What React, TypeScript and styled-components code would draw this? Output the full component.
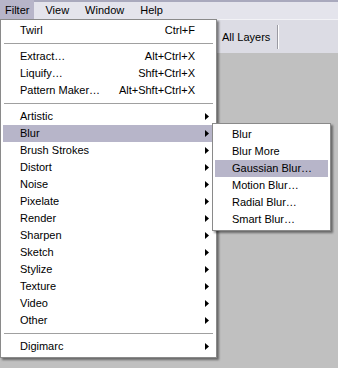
import styled, { createGlobalStyle } from 'styled-components';

const GlobalStyle = createGlobalStyle`
  html, body {
    margin: 0;
    padding: 0;
    background: #c0c0c0;
  }
  body {
    font-family: "Liberation Sans", Arial, sans-serif;
    font-size: 11px;
    color: #000;
  }
`;

const Page = styled.div`
  position: relative;
  width: 338px;
  height: 368px;
  overflow: hidden;
  background: #c0c0c0;
`;

const MenuBar = styled.div`
  display: flex;
  gap: 6px;
  height: 19px;
  background: #e4e4ec;
  border-top: 2px solid #a9a9bd;
  box-sizing: border-box;
`;

const BarItem = styled.div<{ $open?: boolean }>`
  padding: 0 5px;
  background: ${(p) => (p.$open ? '#b7b5c9' : 'transparent')};
  margin-top: ${(p) => (p.$open ? '-2px' : '0')};
  height: ${(p) => (p.$open ? '19px' : '17px')};
  line-height: ${(p) => (p.$open ? '21px' : '17px')};
`;

const Toolbar = styled.div`
  display: flex;
  align-items: center;
  height: 34px;
  padding-left: 222px;
  background: #dcdce4;
  border-top: 1px solid #f2f2f6;
  box-sizing: border-box;
`;

const ToolLabel = styled.span`
  margin-right: 7px;
`;

const ToolSep = styled.div`
  width: 1px;
  height: 24px;
  background: #9a9aa2;
  border-right: 1px solid #ffffff;
`;

const Menu = styled.div<{ $left: number; $top: number; $width: number }>`
  position: absolute;
  left: ${(p) => p.$left}px;
  top: ${(p) => p.$top}px;
  width: ${(p) => p.$width}px;
  box-sizing: border-box;
  background: #ffffff;
  border: 1px solid #8a8a8a;
  padding: 2px;
  box-shadow: 2px 2px 2px rgba(0, 0, 0, 0.45);
`;

const Row = styled.div<{ $active?: boolean }>`
  display: grid;
  grid-template-columns: 1fr auto 19px;
  align-items: center;
  height: 17px;
  line-height: 17px;
  padding-left: 17px;
  white-space: nowrap;
  background: ${(p) => (p.$active ? '#b7b5c9' : 'transparent')};
`;

const Shortcut = styled.span`
  text-align: right;
`;

const ArrowCell = styled.span`
  display: flex;
  align-items: center;
  padding-left: 10px;
`;

const Separator = styled.div`
  height: 1px;
  margin: 4px 1px;
  background: #a0a0a0;
`;

const SubRow = styled.div<{ $active?: boolean }>`
  height: 17px;
  line-height: 17px;
  padding-left: 17px;
  white-space: nowrap;
  background: ${(p) => (p.$active ? '#b7b5c9' : 'transparent')};
`;

const Arrow = () => (
  <svg width="4" height="7" viewBox="0 0 4 7">
    <polygon points="0,0 4,3.5 0,7" fill="#000" />
  </svg>
);

type Item = { label: string; shortcut?: string; sub?: boolean; active?: boolean } | 'sep';

const items: Item[] = [
  { label: 'Twirl', shortcut: 'Ctrl+F' },
  'sep',
  { label: 'Extract…', shortcut: 'Alt+Ctrl+X' },
  { label: 'Liquify…', shortcut: 'Shft+Ctrl+X' },
  { label: 'Pattern Maker…', shortcut: 'Alt+Shft+Ctrl+X' },
  'sep',
  { label: 'Artistic', sub: true },
  { label: 'Blur', sub: true, active: true },
  { label: 'Brush Strokes', sub: true },
  { label: 'Distort', sub: true },
  { label: 'Noise', sub: true },
  { label: 'Pixelate', sub: true },
  { label: 'Render', sub: true },
  { label: 'Sharpen', sub: true },
  { label: 'Sketch', sub: true },
  { label: 'Stylize', sub: true },
  { label: 'Texture', sub: true },
  { label: 'Video', sub: true },
  { label: 'Other', sub: true },
  'sep',
  { label: 'Digimarc', sub: true },
];

const blurItems = ['Blur', 'Blur More', 'Gaussian Blur…', 'Motion Blur…', 'Radial Blur…', 'Smart Blur…'];

export default function App() {
  return (
    <Page>
      <GlobalStyle />
      <MenuBar>
        <BarItem $open>Filter</BarItem>
        <BarItem>View</BarItem>
        <BarItem>Window</BarItem>
        <BarItem>Help</BarItem>
      </MenuBar>
      <Toolbar>
        <ToolLabel>All Layers</ToolLabel>
        <ToolSep />
      </Toolbar>

      <Menu $left={0} $top={19} $width={217}>
        {items.map((it, i) =>
          it === 'sep' ? (
            <Separator key={i} />
          ) : (
            <Row key={i} $active={it.active}>
              <span>{it.label}</span>
              <Shortcut>{it.shortcut}</Shortcut>
              <ArrowCell>{it.sub && <Arrow />}</ArrowCell>
            </Row>
          )
        )}
      </Menu>

      <Menu $left={212} $top={123} $width={119}>
        {blurItems.map((b) => (
          <SubRow key={b} $active={b === 'Gaussian Blur…'}>
            {b}
          </SubRow>
        ))}
      </Menu>
    </Page>
  );
}
